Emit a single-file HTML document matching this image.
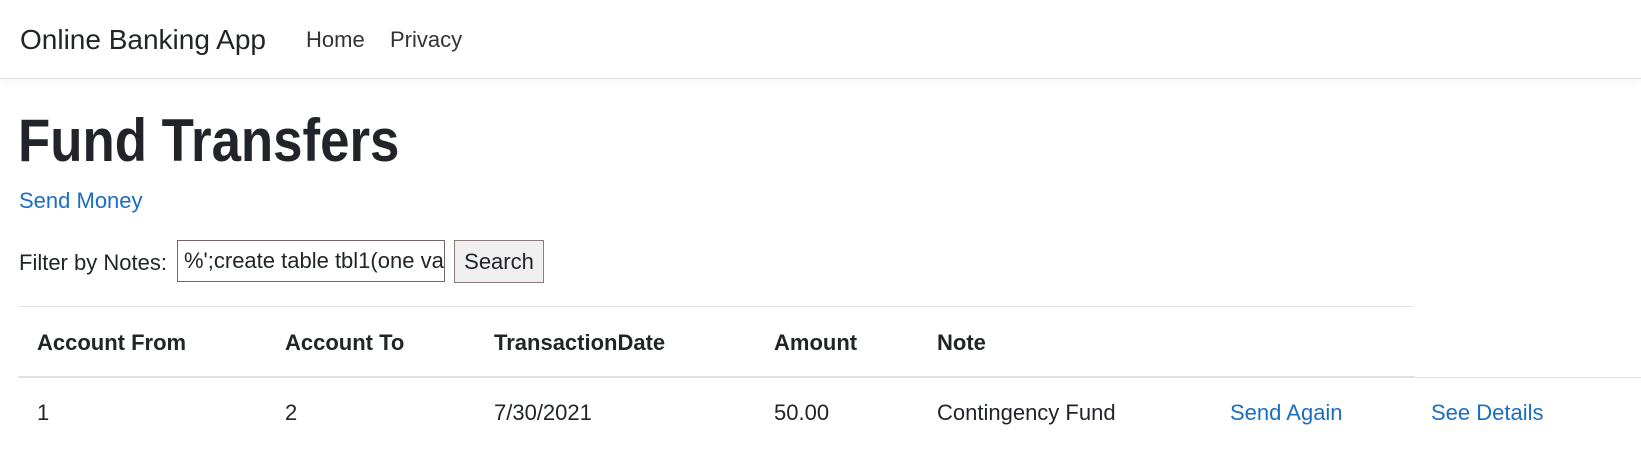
<!DOCTYPE html>
<html><head><meta charset="utf-8"><style>
body{margin:0;width:1641px;height:471px;background:#fff;font-family:"Liberation Sans",sans-serif;color:#212529;position:relative;overflow:hidden}
.a{position:absolute;white-space:nowrap}
.nav{position:absolute;left:0;top:0;width:1641px;height:78px;border-bottom:1px solid #dee2e6;box-shadow:0 4px 10px rgba(0,0,0,.04)}
a{color:#1b6ec2;text-decoration:none}
</style></head><body>
<div class="nav"></div>
<div class="a" style="left:20px;top:23px;font-size:28px;line-height:34px">Online Banking App</div>
<div class="a" style="left:306px;top:26px;font-size:22px;line-height:28px;color:#333">Home</div>
<div class="a" style="left:390px;top:26px;font-size:22px;line-height:28px;color:#333">Privacy</div>
<div class="a" style="left:18px;top:108px;font-size:60px;line-height:66px;font-weight:bold;color:#212529;transform:scaleX(0.88);transform-origin:left">Fund Transfers</div>
<div class="a" style="left:19px;top:187px;font-size:22px;line-height:28px"><a>Send Money</a></div>
<div class="a" style="left:19px;top:249px;font-size:22px;line-height:28px">Filter by Notes:</div>
<div class="a" style="left:177px;top:240px;width:268px;height:42px;border:1px solid #766;box-sizing:border-box;overflow:hidden;font-size:22px;line-height:40px;padding-left:6px">%';create table tbl1(one va</div>
<div class="a" style="left:454px;top:240px;width:90px;height:43px;border:1px solid #8a7a7a;box-sizing:border-box;background:#efefef;font-size:22px;line-height:41px;text-align:center">Search</div>
<div class="a" style="left:18px;top:306px;width:1396px;height:1px;background:#dee2e6"></div>
<div class="a" style="left:18px;top:376px;width:1396px;height:2px;background:#dee2e6"></div>
<div class="a" style="left:1414px;top:377px;width:227px;height:1px;background:#dee2e6"></div>
<div class="a" style="top:329px;font-size:22px;line-height:28px;font-weight:bold;width:1641px;left:0">
<span class="a" style="left:37px">Account From</span>
<span class="a" style="left:285px">Account To</span>
<span class="a" style="left:494px">TransactionDate</span>
<span class="a" style="left:774px">Amount</span>
<span class="a" style="left:937px">Note</span>
</div>
<div class="a" style="top:399px;font-size:22px;line-height:28px;width:1641px;left:0">
<span class="a" style="left:37px">1</span>
<span class="a" style="left:285px">2</span>
<span class="a" style="left:494px">7/30/2021</span>
<span class="a" style="left:774px">50.00</span>
<span class="a" style="left:937px">Contingency Fund</span>
<span class="a" style="left:1230px"><a>Send Again</a></span>
<span class="a" style="left:1431px"><a>See Details</a></span>
</div>
</body></html>
